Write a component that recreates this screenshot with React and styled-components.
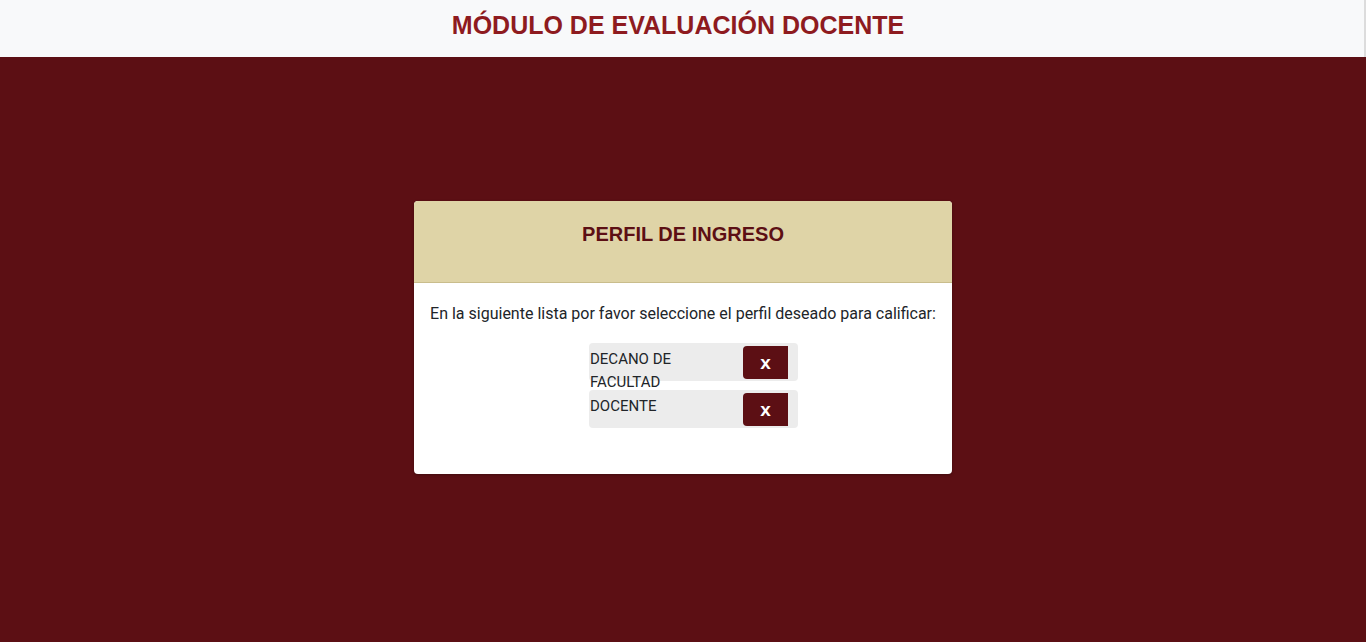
import React from "react";
import styled, { createGlobalStyle } from "styled-components";

const Global = createGlobalStyle`
  html, body { margin: 0; padding: 0; }
  body {
    background: #5c0f14;
    font-family: Roboto, "Liberation Sans", sans-serif;
    min-height: 642px;
  }
`;

const Page = styled.div`
  min-height: 642px;
  display: flex;
  flex-direction: column;
`;

const TopBar = styled.header`
  height: 57px;
  box-sizing: border-box;
  background: #f8f9fa;
  border-right: 2px solid #dcdcdc;
  display: flex;
  align-items: center;
  justify-content: center;
  padding-right: 8px;
  padding-bottom: 6px;
`;

const Title = styled.h1`
  margin: 0;
  font-family: "Liberation Sans", Arial, sans-serif;
  font-weight: 700;
  font-size: 25px;
  color: #8e1b1f;
`;

const Main = styled.main`
  display: flex;
  justify-content: center;
  padding-top: 144px;
`;

const Card = styled.section`
  width: 538px;
  background: #fff;
  border-radius: 4px;
  overflow: hidden;
  box-shadow: 0 1px 3px rgba(0, 0, 0, 0.3);
`;

const CardHead = styled.div`
  height: 82px;
  box-sizing: border-box;
  background: #dfd4a7;
  border-bottom: 1px solid #c9bd8c;
  display: flex;
  align-items: center;
  justify-content: center;
  padding-bottom: 14px;
`;

const CardTitle = styled.h2`
  margin: 0;
  font-family: "Liberation Sans", Arial, sans-serif;
  font-weight: 700;
  font-size: 20px;
  color: #5c0f14;
`;

const CardBody = styled.div`
  padding: 20px 0 46px;
  display: flex;
  flex-direction: column;
  align-items: center;
`;

const Lead = styled.p`
  margin: 0 0 18px;
  font-size: 16px;
  line-height: 22px;
  color: #212529;
`;

const List = styled.div`
  display: flex;
  flex-direction: column;
  gap: 9px;
  width: 209px;
  margin-left: 21px;
`;

const Row = styled.div`
  height: 38px;
  background: #ececec;
  border-radius: 4px;
  display: flex;
  align-items: flex-start;
  padding-right: 10px;
`;

const Label = styled.span`
  flex: 1;
  font-size: 15px;
  line-height: 23px;
  color: #212529;
  padding: 5px 0 0 1px;
  max-width: 110px;
`;

const XButton = styled.button`
  margin: 3px 0 0 auto;
  width: 45px;
  height: 33px;
  border: 0;
  border-radius: 4px 0 0 4px;
  background: #5c0f14;
  color: #fff;
  font-family: "Liberation Sans", Arial, sans-serif;
  font-weight: 700;
  font-size: 19px;
  line-height: 33px;
  padding: 0 0 6px;
  cursor: pointer;
`;

const profiles = ["DECANO DE FACULTAD", "DOCENTE"];

export default function App() {
  return (
    <Page>
      <Global />
      <TopBar>
        <Title>MÓDULO DE EVALUACIÓN DOCENTE</Title>
      </TopBar>
      <Main>
        <Card>
          <CardHead>
            <CardTitle>PERFIL DE INGRESO</CardTitle>
          </CardHead>
          <CardBody>
            <Lead>En la siguiente lista por favor seleccione el perfil deseado para calificar:</Lead>
            <List>
              {profiles.map((p) => (
                <Row key={p}>
                  <Label>{p}</Label>
                  <XButton>x</XButton>
                </Row>
              ))}
            </List>
          </CardBody>
        </Card>
      </Main>
    </Page>
  );
}
